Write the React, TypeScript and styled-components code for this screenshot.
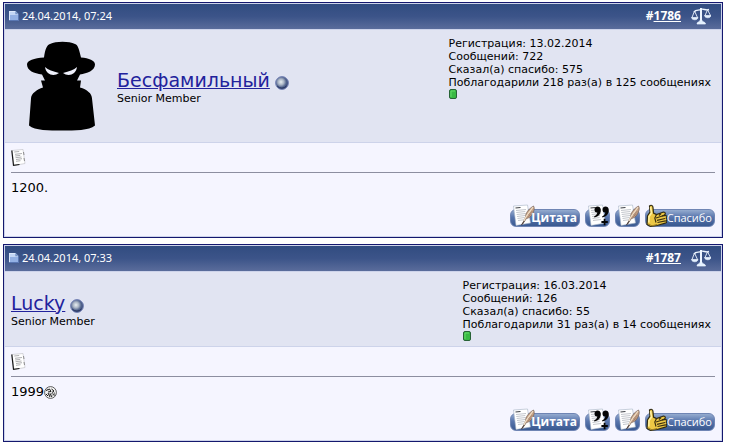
import React from 'react';
import styled, { createGlobalStyle } from 'styled-components';

const GlobalStyle = createGlobalStyle`
  *, *::before, *::after { box-sizing: border-box; }
  body {
    margin: 0;
    background: #fffffd;
    color: #000;
    font: 11px/13px Verdana, "DejaVu Sans", sans-serif;
  }
  svg { display: block; flex: none; }
`;

const Thread = styled.main`
  display: flex;
  flex-direction: column;
  gap: 6px;
  padding: 2px 6px 2px 3px;
`;

const PostFrame = styled.article`
  display: flex;
  flex-direction: column;
  gap: 1px;
  padding: 1px;
  border: 1px solid #14186e;
  background: #cdd3ea;
`;

const PostHeader = styled.header`
  display: flex;
  align-items: center;
  justify-content: space-between;
  height: 25px;
  padding: 0 10px 2px 4px;
  background: linear-gradient(#314c80, #3c5489 50%, #5a6c9b);
  color: #fff;
  font-family: Tahoma, "Noto Sans", sans-serif;
`;

const HeaderGroup = styled.div<{ $gap: number }>`
  display: flex;
  align-items: center;
  gap: ${(p) => p.$gap}px;
`;

const PostNumber = styled.strong`
  font-size: 12px;
  a { color: inherit; }
`;

const UserPanel = styled.section`
  display: flex;
  align-items: center;
  gap: 6px;
  padding: 0 6px;
  background: #e1e4f2;
`;

const AvatarFrame = styled.div`
  padding: 6px 0;
`;

const Identity = styled.div`
  flex: 1;
`;

const NameRow = styled.div`
  display: flex;
  align-items: center;
  gap: 5px;
  height: 24px;
`;

const UserName = styled.a`
  color: #22229c;
  font-size: 19px;
  line-height: 24px;
`;

const StatusSlot = styled.span`
  padding-top: 6px;
`;

const Stats = styled.div`
  align-self: flex-start;
  padding: 7px 4px 2px 0;
  white-space: nowrap;
`;

const Reputation = styled.div`
  height: 13px;
`;

const PostBody = styled.section`
  display: flex;
  flex-direction: column;
  height: 93px;
  padding: 6px;
  background: #f5f5ff;
`;

const Rule = styled.hr`
  width: 100%;
  height: 1px;
  margin: 6px 0;
  border: 0;
  background: #8c8ea0;
`;

const Message = styled.div`
  display: flex;
  align-items: center;
  font-size: 13px;
  line-height: 18px;
`;

const Actions = styled.div`
  display: flex;
  justify-content: flex-end;
  gap: 5px;
  margin-top: auto;
  padding-bottom: 2px;
`;

const ActionButton = styled.button<{ $width: number; $bold?: boolean }>`
  position: relative;
  display: flex;
  align-items: center;
  justify-content: flex-end;
  width: ${(p) => p.$width}px;
  height: 24px;
  padding: 3px 3px 0 0;
  border: 0;
  background: none;
  color: #fff;
  font: ${(p) => (p.$bold ? 'bold 12px' : '11px')}/18px "Open Sans", "Noto Sans", sans-serif;
  white-space: nowrap;
  cursor: pointer;

  &::before {
    content: '';
    position: absolute;
    inset: 5px 0 1px;
    border: 1px solid #6f85b4;
    border-radius: 6px;
    background: linear-gradient(#95abcf, #5875ad 45%, #395990);
  }
`;

const ButtonArt = styled.svg`
  position: absolute;
  top: 0;
  left: 0;
`;

const ButtonText = styled.span`
  position: relative;
`;

const OldPostIcon = () => (
  <svg width="10" height="11" viewBox="0 0 10 11" aria-hidden="true">
    <path d="M.5 1h6l3 3v6.5h-9z" fill="#c3d6f6" />
    <path d="M.5 5h9v5.5h-9z" fill="#93b0e4" />
    <path d="M.5 1.5h6M.5 1v9" stroke="#dce8fb" />
    <path d="M6.3 1 9.5 4.2H6.3z" fill="#7391c6" />
    <path d="M.5 10.5h9V4" fill="none" stroke="#5a77b3" />
  </svg>
);

const ScalesIcon = () => (
  <svg width="20" height="18" viewBox="0 0 20 18" fill="none" stroke="#edf5ff" aria-hidden="true">
    <path d="M10 1v13" strokeWidth="2" />
    <path d="M3 5C5 2 8 4 10 2.5 12 1 15 4 18 2.5" strokeWidth="1.4" />
    <path d="M3.5 4 1 10.5M3.5 4l3 6.5M16.5 2.8 14 8.5M16.5 2.8l3 5.7" strokeWidth=".9" />
    <path d="M.5 10.5h6.5c-.5 3-6 3-6.5 0zM13.5 8.5H20c-.5 3-6 3-6.5 0zM6 17c0-2.5 2.7-1.5 3.3-4h1.4c.6 2.5 3.8 1.5 3.8 4z" fill="#e4f1ff" strokeWidth=".7" />
  </svg>
);

const SpyAvatar = () => (
  <svg width="100" height="100" viewBox="0 0 100 100" role="img" aria-label="Аватар">
    <path d="M33 21.500C34 13 36 9 39 8c6-3 19-3 25 0 3 1 4 5 6 13.500 8 .5 14 3 14 7 0 6-8 9-15 10l-3 6h4l-1 7c7 2 12 6 12 11l3 27c-6 5-20 5-33 5s-27 0-33-5l2-27c0-5 6-9 12-11l-2-7h4l-3-6c-8-1-15-4-15-10 0-4 7-6.500 17-7z" fill="#000" />
    <path d="M34 31c3 3 8 4 14 6-5 4-13 2-14-6zM66 31c-3 3-8 4-14 6 5 4 13 2 14-6z" fill="#eef0fb" />
  </svg>
);

const StatusOrb = () => (
  <svg width="14" height="14" viewBox="0 0 14 14" role="img" aria-label="Не в сети">
    <defs>
      <radialGradient id="orb" cx="42%" cy="42%" r="58%">
        <stop offset="0" stopColor="#e9eff2" />
        <stop offset=".4" stopColor="#a8b3c4" />
        <stop offset=".7" stopColor="#54668f" />
        <stop offset="1" stopColor="#394774" />
      </radialGradient>
    </defs>
    <circle cx="7" cy="7" r="6.4" fill="url(#orb)" stroke="#7583b7" strokeWidth="1" />
    <path d="M2.2 10a6 6 0 0 0 9.2 0" fill="none" stroke="#273562" />
  </svg>
);

const ReputationPip = () => (
  <svg width="8" height="10" viewBox="0 0 8 10" role="img" aria-label="Репутация">
    <rect x=".5" y=".5" width="7" height="9" rx="1.5" fill="#38b943" stroke="#276236" />
    <path d="M2 8V2h4" fill="none" stroke="#63da68" />
  </svg>
);

const NoteIcon = () => (
  <svg width="15" height="17" viewBox="0 0 15 17" aria-hidden="true">
    <path d="m1 1.500 11-1 2 14-11 2z" fill="#fff" stroke="#c4c4ca" strokeWidth=".7" />
    <path d="M.8 1.500 2.500 16.300l6-.8" fill="none" stroke="#161616" strokeWidth="1.200" />
    <path d="m3.200 3 5-.5M4 5.300l7-.8M4.200 7l5-.6M4.500 8.700l6-.7M5 10.500l6-.8M5 12.300l4.500-.6" stroke="#8c8c90" strokeWidth=".7" />
    <path d="m12.500 3 .5 3M13 9l.5 3" stroke="#777" strokeWidth=".8" />
  </svg>
);

const LaughIcon = () => (
  <svg width="13" height="13" viewBox="0 0 13 13" role="img" aria-label="Смех">
    <circle cx="6.500" cy="6.500" r="5.900" fill="#f4f4f4" stroke="#333" strokeWidth=".8" />
    <path d="m2 4.500 3.500-1.500L7 5.500 4 6M7.500 3l2.500 2M8 6.500l2-1.500M4 7l2 4M6 8l2 3M9 7.500l1.500 2M2 8l2 2" fill="none" stroke="#111" />
    <path d="m5 8 4-1M10 6l1 3M3 3l2 1M7 9h3" fill="none" stroke="#555" strokeWidth=".7" />
  </svg>
);

const Paper = () => (
  <g>
    <path d="m3.500 2 14-1 3 18-14.500 2.500z" fill="#fff" stroke="#a5b1c4" strokeWidth=".6" />
    <path d="m5.500 4 5-.5" stroke="#3e4147" strokeWidth="1.200" />
    <path d="m6 6.500 10-1M6.300 8.500l9-1M6.700 10.500l9-1M7 12.500l8-1M7.500 14.500l7-1M8 16.500l8-1" stroke="#b4b8bf" strokeWidth=".8" />
  </g>
);

const Quill = () => (
  <g>
    <path d="m12.500 20 3-7c0-4 3-8 8-11 1.500 2 .5 5-1 8-1.500 2.500-3.500 4-6 4.500z" fill="#c7a387" stroke="#725e55" strokeWidth=".7" />
    <path d="m12.500 20 3-6.500C18 10 21 6 23 3" fill="none" stroke="#f0dfc7" strokeWidth="1.200" />
    <path d="m11.500 21 2.800-4" stroke="#493c3b" strokeWidth="1.200" />
    <path d="m17.500 13 4-3M18.500 11l4-4" stroke="#8d6959" strokeWidth=".6" />
  </g>
);

const DocumentArt = ({ mode }: { mode: 'quill' | 'multi' }) => (
  <ButtonArt width="26" height="24" viewBox="0 0 26 24" aria-hidden="true">
    <Paper />
    {mode === 'quill' ? (
      <Quill />
    ) : (
      <g fill="#050505">
        <path d="M9.500 5.500c0-4 6.300-4 6.300.5 0 4-2.300 6.500-6.300 7.500l-.5-1c2-1 3.100-2.400 3.300-4-1.700.4-2.800-.8-2.800-3zM17.500 5.500c0-4 6.300-4 6.300.5 0 4-2.300 6.500-6.300 7.500l-.5-1c2-1 3.100-2.400 3.300-4-1.700.4-2.800-.8-2.800-3z" />
        <path d="M18.700 14.800h1.800v2.300h2.300v1.800h-2.300v2.300h-1.800v-2.300h-2.300v-1.800h2.300z" />
      </g>
    )}
  </ButtonArt>
);

const ThumbArt = () => (
  <ButtonArt width="24" height="24" viewBox="0 0 24 24" aria-hidden="true">
    <path d="M4.500 2c1.500-1.500 3.500-.5 3.500 1.500L8.500 9l3 1.500 7-2.500c2 0 2.500 2 .8 3l-2.300 1 3.500-.5c1.800 0 1.800 2.200.3 2.800 1.700.2 1.500 2.200.2 2.700 1 .8.5 2-.7 2.200L12 21.500l-6.500 1L2 20.500 2.500 12 5 8z" fill="#edc845" stroke="#302b13" strokeWidth="1.200" />
    <path d="M5.500 3 6.500 9 4 12.500l-.2 6" fill="none" stroke="#fff0a0" strokeWidth="1.600" />
    <path d="m11 14 8-2.500M12 16.300l8-1.800M12.500 18.500l8-1.700M11.500 10.500 9.800 14l1.200 4.500M16 9.500l-2 2" fill="none" stroke="#3c3010" strokeWidth="1.200" />
    <path d="m3 20 4 1.800 5-1.300" fill="none" stroke="#9b7c22" />
  </ButtonArt>
);

interface PostData {
  time: string;
  number: string;
  user: string;
  avatar?: boolean;
  stats: string[];
  text: string;
  laugh?: boolean;
}

const posts: PostData[] = [
  {
    time: '24.04.2014, 07:24',
    number: '1786',
    user: 'Бесфамильный',
    avatar: true,
    stats: [
      'Регистрация: 13.02.2014',
      'Сообщений: 722',
      'Сказал(а) спасибо: 575',
      'Поблагодарили 218 раз(а) в 125 сообщениях',
    ],
    text: '1200.',
  },
  {
    time: '24.04.2014, 07:33',
    number: '1787',
    user: 'Lucky',
    stats: [
      'Регистрация: 16.03.2014',
      'Сообщений: 126',
      'Сказал(а) спасибо: 55',
      'Поблагодарили 31 раз(а) в 14 сообщениях',
    ],
    text: '1999',
    laugh: true,
  },
];

const Post = ({ post }: { post: PostData }) => (
  <PostFrame>
    <PostHeader>
      <HeaderGroup $gap={3}>
        <OldPostIcon />
        <time>{post.time}</time>
      </HeaderGroup>
      <HeaderGroup $gap={10}>
        <PostNumber>
          #<a href={`#post${post.number}`}>{post.number}</a>
        </PostNumber>
        <ScalesIcon />
      </HeaderGroup>
    </PostHeader>
    <UserPanel>
      {post.avatar && (
        <AvatarFrame>
          <SpyAvatar />
        </AvatarFrame>
      )}
      <Identity>
        <NameRow>
          <UserName href="#member">{post.user}</UserName>
          <StatusSlot>
            <StatusOrb />
          </StatusSlot>
        </NameRow>
        <div>Senior Member</div>
      </Identity>
      <Stats>
        {post.stats.map((line) => (
          <div key={line}>{line}</div>
        ))}
        <Reputation>
          <ReputationPip />
        </Reputation>
      </Stats>
    </UserPanel>
    <PostBody>
      <NoteIcon />
      <Rule />
      <Message>
        {post.text}
        {post.laugh && <LaughIcon />}
      </Message>
      <Actions>
        <ActionButton type="button" $width={70} $bold>
          <DocumentArt mode="quill" />
          <ButtonText>Цитата</ButtonText>
        </ActionButton>
        <ActionButton type="button" $width={25} aria-label="Мультицитата">
          <DocumentArt mode="multi" />
        </ActionButton>
        <ActionButton type="button" $width={25} aria-label="Быстрый ответ">
          <DocumentArt mode="quill" />
        </ActionButton>
        <ActionButton type="button" $width={70}>
          <ThumbArt />
          <ButtonText>Спасибо</ButtonText>
        </ActionButton>
      </Actions>
    </PostBody>
  </PostFrame>
);

export default function App() {
  return (
    <>
      <GlobalStyle />
      <Thread>
        {posts.map((post) => (
          <Post key={post.number} post={post} />
        ))}
      </Thread>
    </>
  );
}
